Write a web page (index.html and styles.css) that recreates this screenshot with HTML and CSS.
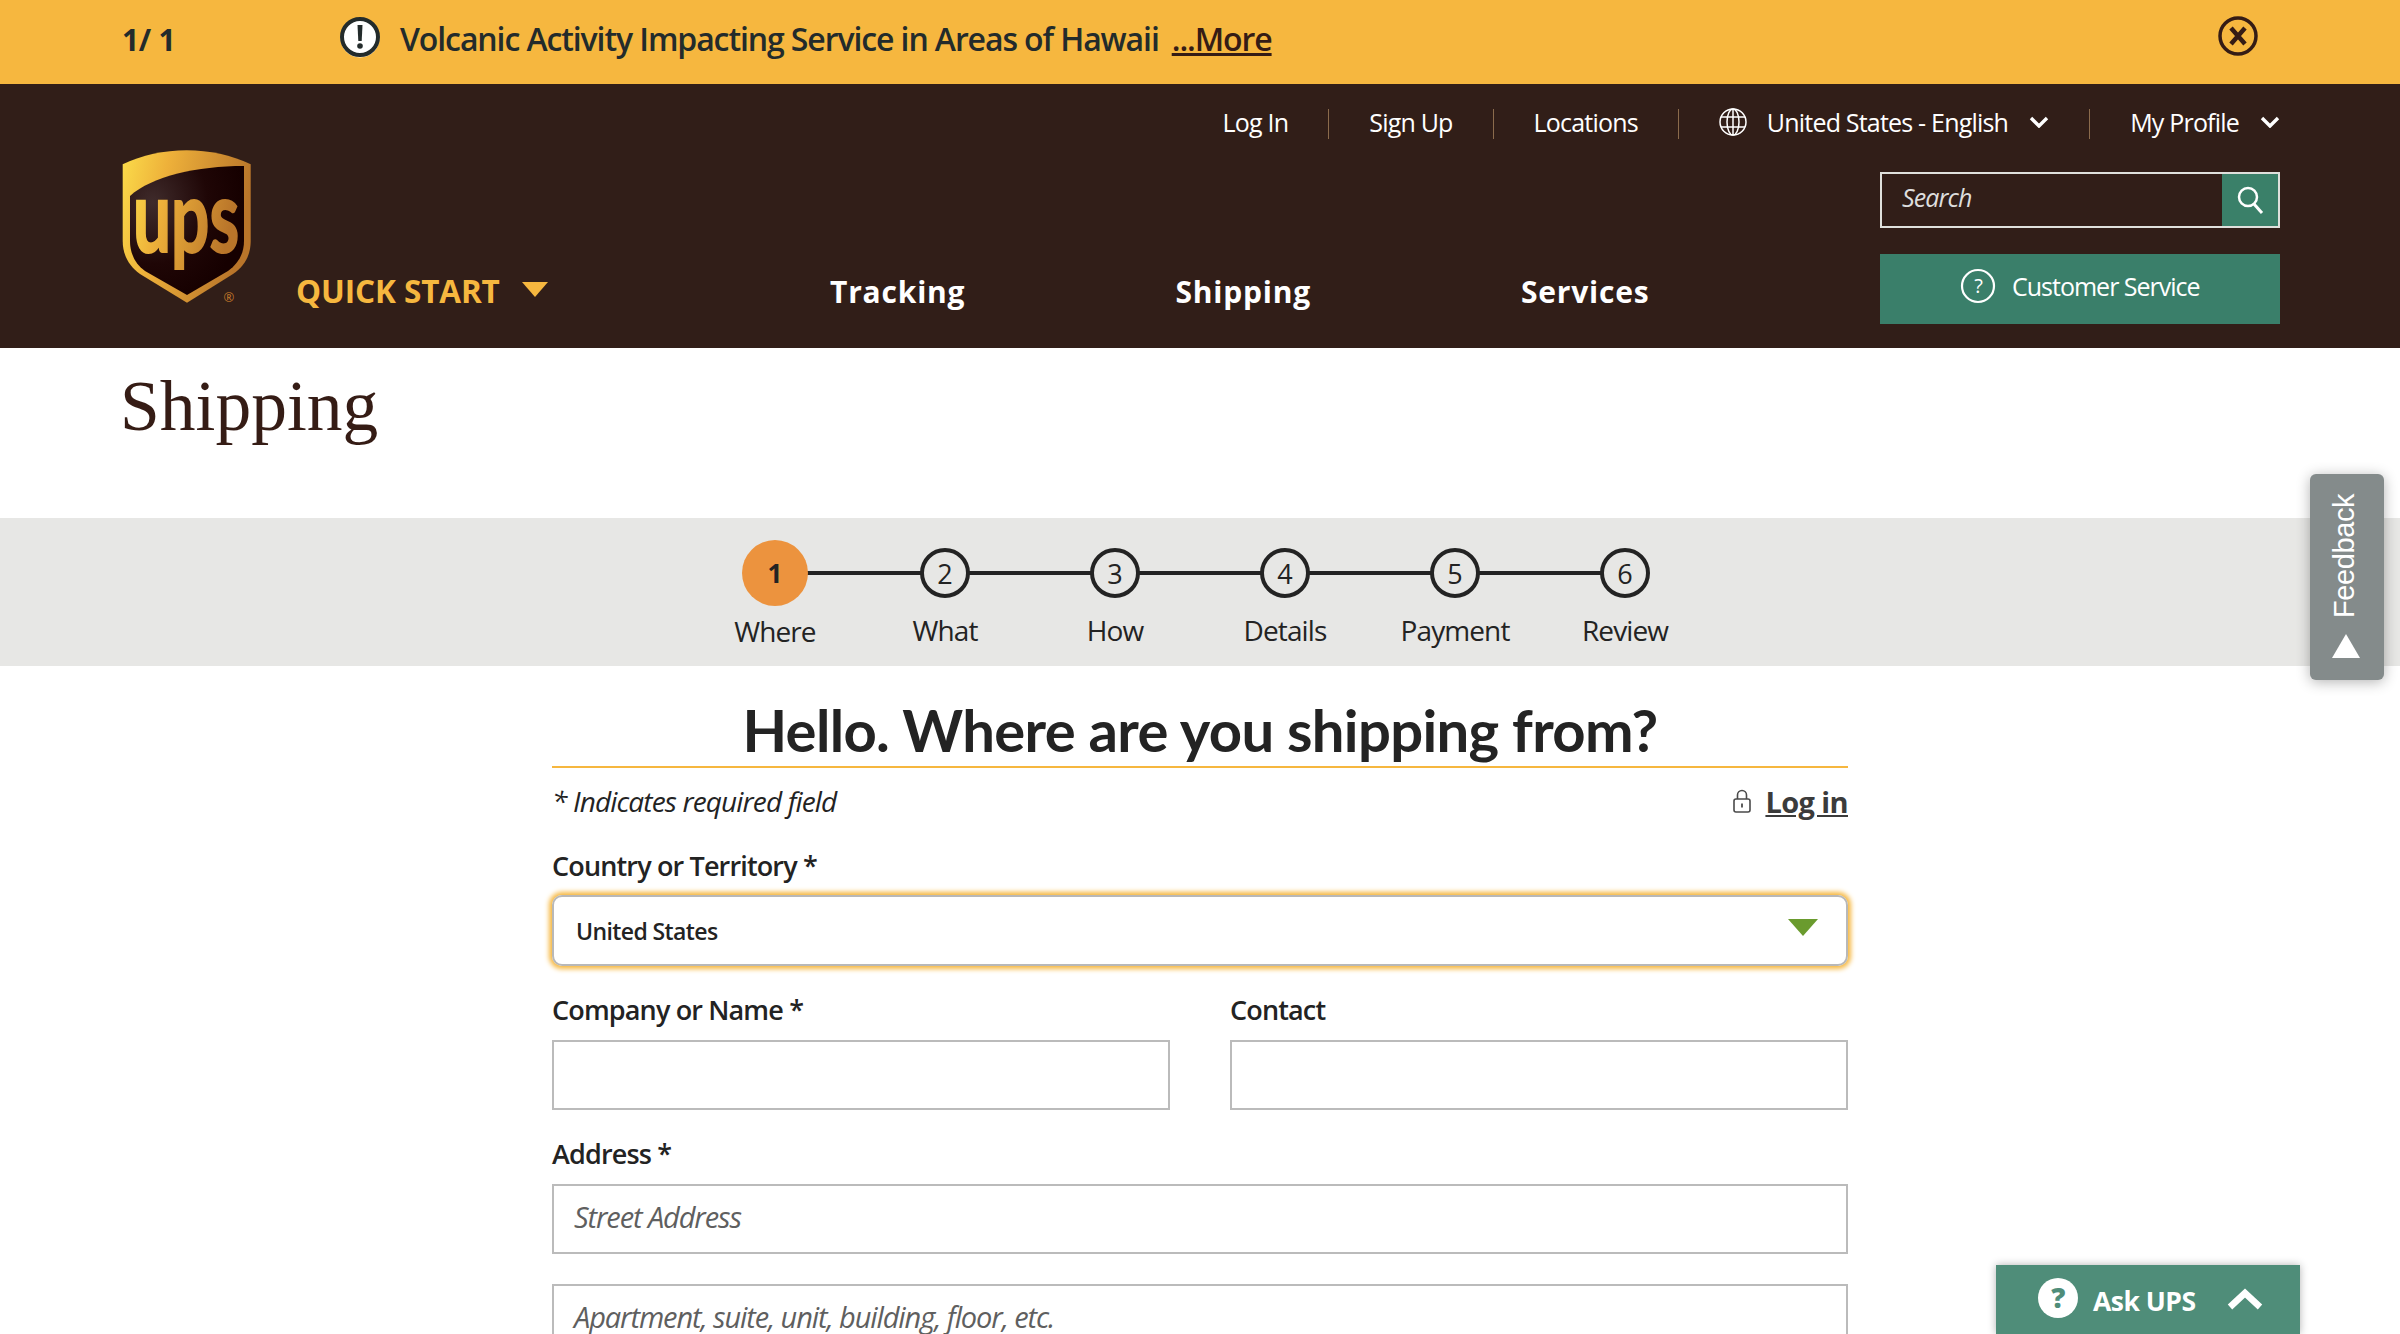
FILE: index.html
```html
<!DOCTYPE html>
<html lang="en">
<head>
<meta charset="utf-8">
<title>UPS Shipping</title>
<link rel="stylesheet" href="styles.css">
</head>
<body>
<div class="alert">
  <span class="alert-count">1/ 1</span>
  <svg class="alert-icon" viewBox="0 0 40 42"><circle cx="20" cy="21" r="19.5" fill="#fff"/><circle cx="20" cy="20" r="18" fill="#fff" stroke="#232b2b" stroke-width="4"/><path d="M17.500 8h5l-.8 16h-3.400z" fill="#232b2b"/><circle cx="20" cy="29" r="2.800" fill="#232b2b"/></svg>
  <span class="alert-text">Volcanic Activity Impacting Service in Areas of Hawaii</span>
  <a class="alert-more">...More</a>
  <svg class="alert-close" viewBox="0 0 40 40"><circle cx="20" cy="20" r="18" fill="none" stroke="#351c15" stroke-width="3.500"/><path d="M13 12l14 16M27 12L13 28" stroke="#351c15" stroke-width="4.500" fill="none"/></svg>
</div>
<header class="masthead">
  <svg class="logo" viewBox="0 0 130 158" role="img" aria-label="UPS">
    <defs>
      <linearGradient id="gold" x1="0" y1="0" x2="1" y2="0.25"><stop offset="0" stop-color="#fbdc4a"/><stop offset=".35" stop-color="#eeb13a"/><stop offset="1" stop-color="#b9752a"/></linearGradient>
      <radialGradient id="dark" cx=".2" cy=".28" r=".8"><stop offset="0" stop-color="#3f2b2b"/><stop offset=".6" stop-color="#1f0606"/><stop offset="1" stop-color="#160000"/></radialGradient>
    </defs>
    <path d="M.7 15.300C20 6 42 1.300 64.700 1.300s44.700 4.700 64 14V92c0 14-6 25-17.700 33L65 153.700 18 125C7 117 .7 106 .7 92z" fill="url(#gold)"/>
    <path d="M8 47C30 27 75 17 122 17V92c0 12-5 22-16 30L65 146 23 122C13 115 8 104 8 92z" fill="url(#dark)"/>
    <text class="logo-text" transform="translate(11 103) scale(1.125 1.667)" fill="url(#gold)" stroke="url(#gold)" stroke-width="1.200">ups</text>
    <text class="logo-reg" x="107" y="153" text-anchor="middle">®</text>
  </svg>
  <a class="quick">QUICK START <span class="quick-arrow"></span></a>
  <nav class="main-nav"><a>Tracking</a><a>Shipping</a><a>Services</a></nav>
  <div class="head-right">
    <div class="util">
      <a>Log In</a><i></i><a>Sign Up</a><i></i><a>Locations</a><i></i>
      <a class="util-lang"><svg class="globe" viewBox="0 0 28 28"><g fill="none" stroke="#fff" stroke-width="1.500"><circle cx="14" cy="14" r="13"/><ellipse cx="14" cy="14" rx="6" ry="13"/><path d="M14 1v26M2 9h24M2 19h24"/></g></svg>United States - English<svg class="chev" viewBox="0 0 20 12"><path d="M2 2l8 8 8-8" fill="none" stroke="#fff" stroke-width="3.400"/></svg></a><i></i>
      <a class="util-prof">My Profile<svg class="chev" viewBox="0 0 20 12"><path d="M2 2l8 8 8-8" fill="none" stroke="#fff" stroke-width="3.400"/></svg></a>
    </div>
    <div class="search"><span class="search-ph">Search</span><span class="search-btn"><svg viewBox="0 0 30 30"><circle cx="13" cy="12" r="9" fill="none" stroke="#fff" stroke-width="2.500"/><path d="M19 19l8 9" stroke="#fff" stroke-width="3" fill="none"/></svg></span></div>
    <a class="cs"><svg viewBox="0 0 36 36"><circle cx="18" cy="18" r="16" fill="none" stroke="#fff" stroke-width="2.200"/><text x="18" y="25" text-anchor="middle" class="cs-q">?</text></svg>Customer Service</a>
  </div>
</header>
<h1 class="page-title">Shipping</h1>
<div class="stepper">
  <div class="step active"><span class="dot"><b>1</b></span><span class="lbl">Where</span></div>
  <div class="step"><span class="dot"><b>2</b></span><span class="lbl">What</span></div>
  <div class="step"><span class="dot"><b>3</b></span><span class="lbl">How</span></div>
  <div class="step"><span class="dot"><b>4</b></span><span class="lbl">Details</span></div>
  <div class="step"><span class="dot"><b>5</b></span><span class="lbl">Payment</span></div>
  <div class="step"><span class="dot"><b>6</b></span><span class="lbl">Review</span></div>
</div>
<main class="form">
  <h2 class="hello">Hello. Where are you shipping from?</h2>
  <div class="req-row"><em>* Indicates required field</em><a class="login"><svg viewBox="0 0 18 24"><rect x="1" y="10" width="16" height="13" rx="2" fill="none" stroke="#4a4a4a" stroke-width="1.600"/><path d="M4.500 10V6a4.500 4.500 0 0 1 9 0v4" fill="none" stroke="#4a4a4a" stroke-width="1.600"/><path d="M9 14.500v4" stroke="#4a4a4a" stroke-width="1.800"/></svg><span>Log in</span></a></div>
  <label class="lab lab-first">Country or Territory *</label>
  <div class="select"><span>United States</span><i class="select-arrow"></i></div>
  <div class="two">
    <div><label class="lab">Company or Name *</label><div class="input"></div></div>
    <div><label class="lab">Contact</label><div class="input"></div></div>
  </div>
  <label class="lab lab-addr">Address *</label>
  <div class="input ph">Street Address</div>
  <div class="input ph apt">Apartment, suite, unit, building, floor, etc.</div>
</main>
<aside class="feedback"><span class="fb-text">Feedback</span><span class="fb-arrow"></span></aside>
<aside class="ask"><svg viewBox="0 0 40 40"><circle cx="20" cy="20" r="20" fill="#fff"/><text x="20" y="30" text-anchor="middle" class="ask-q">?</text></svg><span>Ask UPS</span><svg class="ask-chev" viewBox="0 0 36 22"><path d="M3 19L18 5l15 14" fill="none" stroke="#fff" stroke-width="6.500"/></svg></aside>
</body>
</html>
```
FILE: styles.css
```css
html, body { margin: 0; height: 1334px; overflow: hidden; background: #fff; }
body { font-family: "Open Sans", "Liberation Sans", sans-serif; color: #232323; position: relative; }
a { color: inherit; }

.alert { height: 84px; background: #f6b73f; display: flex; align-items: center; padding-left: 122px; position: relative; box-sizing: border-box; font-weight: 600; color: #232b2b; }
.alert-count { width: 218px; font-size: 30px; font-weight: 700; letter-spacing: -.3px; margin-top: -5px; }
.alert-icon { width: 40px; height: 42px; margin-right: 20px; margin-top: -8px; }
.alert-text { font-size: 32px; letter-spacing: -1.1px; margin-top: -7px; }
.alert-more { font-size: 32px; letter-spacing: -1.1px; color: #351c15; text-decoration: underline; margin-left: 13px; margin-top: -7px; }
.alert-close { position: absolute; left: 2218px; top: 16px; width: 40px; height: 40px; }

.masthead { height: 264px; background: #311e18; display: flex; padding: 0 120px 0 122px; color: #fff; box-sizing: border-box; }
.logo { width: 130px; height: 158px; margin-top: 65px; flex: none; }
.logo-text { font: 700 60px "Lato", sans-serif; }
.logo-reg { font: 400 13px "Open Sans", sans-serif; fill: #c0772a; }
.quick { margin: 187px 0 0 44px; font-size: 31.5px; font-weight: 700; color: #f6b73f; line-height: 40px; height: 40px; white-space: nowrap; letter-spacing: -.1px; flex: none; width: 238px; }
.quick-arrow { display: inline-block; border: 13px solid transparent; border-top: 15px solid #f6b73f; border-bottom: 0; margin-left: 14px; vertical-align: 6px; }
.main-nav { display: flex; margin: 188px 0 0 0; flex: none; width: 1050px; padding-left: 296px; box-sizing: border-box; gap: 210px; }
.main-nav a { font-size: 30px; font-weight: 700; line-height: 40px; letter-spacing: .8px; flex: none; }
.head-right { margin-left: auto; width: 400px; flex: none; position: relative; }

.util { position: absolute; right: 0; top: 22px; display: flex; align-items: center; height: 32px; font-size: 25px; letter-spacing: -.8px; white-space: nowrap; gap: 40px; }
.util i { width: 1px; height: 30px; background: #8b6b4c; margin-top: 4px; }
.util a { display: flex; align-items: center; }
.globe { width: 28px; height: 28px; margin-right: 20px; }
.chev { width: 20px; height: 12px; margin-left: 21px; }
.search { margin-top: 88px; height: 56px; border: 2px solid #dfe0dc; box-sizing: border-box; display: flex; justify-content: space-between; }
.search-ph { font-size: 25px; font-style: italic; color: #ddd; letter-spacing: -.9px; padding: 6px 0 0 20px; }
.search-btn { width: 56px; background: #3a8069; display: flex; align-items: center; justify-content: center; }
.search-btn svg { width: 30px; height: 30px; }
.cs { margin-top: 26px; height: 70px; background: #3a7f6a; display: flex; align-items: center; padding: 0 0 6px 80px; font-size: 25px; letter-spacing: -1px; box-sizing: border-box; }
.cs svg { width: 36px; height: 36px; margin-right: 16px; }
.cs-q { font-size: 20px; fill: #fff; font-family: "Open Sans", sans-serif; }

.page-title { margin: 0; font: 400 71.5px/100px "Liberation Serif", serif; color: #351c15; padding: 8px 0 0 120px; height: 170px; box-sizing: border-box; }
.stepper { height: 148px; background: #e7e7e5; display: flex; justify-content: center; padding-top: 22px; box-sizing: border-box; }
.step { width: 170px; display: flex; flex-direction: column; align-items: center; position: relative; }
.step::after { content: ""; position: absolute; left: 50%; top: 31px; width: 170px; height: 4px; background: #232323; }
.step:last-child::after { display: none; }
.dot { width: 66px; height: 66px; display: flex; align-items: center; justify-content: center; position: relative; z-index: 1; }
.dot b { font-weight: 400; width: 50px; height: 50px; border: 4px solid #232323; border-radius: 50%; background: #e7e7e5; box-sizing: border-box; display: flex; align-items: center; justify-content: center; font-size: 27px; }
.step.active .dot { background: #ec933e; border-radius: 50%; }
.step.active .dot b { background: none; border: 0; font-weight: 700; font-size: 26px; }
.lbl { font-size: 28px; letter-spacing: -.9px; line-height: 36px; margin-top: 6px; }
.step.active .lbl { margin-top: 7px; }

.form { width: 1296px; margin: 0 auto; }
.hello { margin: 0; height: 102px; box-sizing: border-box; padding-top: 31px; text-align: center; font: 700 58px/66px "Lato", sans-serif; letter-spacing: -.65px; border-bottom: 2px solid #f6b73f; color: #232323; white-space: nowrap; }
.req-row { display: flex; justify-content: space-between; align-items: center; height: 66px; font-size: 28px; letter-spacing: -.85px; }
.login { display: flex; align-items: center; color: #351c15; font-weight: 700; font-size: 29px; letter-spacing: -.6px; }
.login svg { width: 18px; height: 24px; margin-right: 14px; }
.login span { text-decoration: underline; color: #3b3b3b; }
.lab { display: block; font-size: 27px; font-weight: 600; letter-spacing: -.85px; line-height: 34px; color: #232323; }
.lab-first { margin-top: 15px; }
.select { margin-top: 12px; height: 71px; border: 2px solid #b8b8b8; border-radius: 10px; box-shadow: 0 0 5px 3px #f6b73f; box-sizing: border-box; display: flex; align-items: center; justify-content: space-between; padding: 0 28px 0 22px; font-size: 23px; font-weight: 600; letter-spacing: -.6px; }
.select-arrow { border: 15px solid transparent; border-top: 17px solid #6a9b2e; border-bottom: 0; margin-top: -6px; }
.two { display: grid; grid-template-columns: 618px 618px; gap: 60px; margin-top: 27px; }
.input { height: 70px; border: 2px solid #bbb; box-sizing: border-box; margin-top: 13px; }
.lab-addr { margin-top: 27px; }
.ph { display: flex; align-items: center; padding: 0 0 6px 20px; font-size: 29px; font-style: italic; letter-spacing: -1.1px; color: #5f5f5f; }
.apt { margin-top: 30px; }

.feedback { position: absolute; left: 2310px; top: 474px; width: 74px; height: 206px; background: #848b8b; border-radius: 6px; box-shadow: 0 2px 14px rgba(0,0,0,.3); display: flex; flex-direction: column; align-items: center; color: #fff; }
.fb-text { writing-mode: vertical-rl; transform: rotate(180deg); font: 29px "Liberation Sans", sans-serif; margin: 22px 6px 0 0; height: 122px; text-align: left; line-height: 30px; letter-spacing: -.4px; }
.fb-arrow { border: 14px solid transparent; border-bottom: 24px solid #fff; border-top: 0; margin-top: 16px; margin-left: -2px; }
.ask { position: absolute; left: 1996px; top: 1265px; width: 304px; height: 69px; background: #4f8d79; box-shadow: 0 0 8px rgba(0,0,0,.3); display: flex; align-items: center; color: #fff; font-weight: 700; font-size: 26.5px; letter-spacing: -.5px; padding: 0 0 0 42px; box-sizing: border-box; }
.ask span { margin-top: 2px; }
.ask svg { width: 40px; height: 40px; margin-right: 15px; margin-top: -4px; flex: none; }
.ask .ask-chev { width: 36px; height: 22px; margin: -2px 0 0 31px; }
.ask-q { font: 800 28px "Open Sans", sans-serif; fill: #4f8d79; }
```
